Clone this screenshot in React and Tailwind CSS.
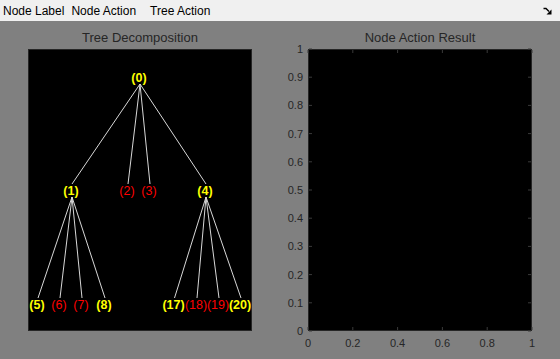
import React from 'react';

const nodes = [
  { id: 0, x: 111, y: 29, c: 'y' },
  { id: 1, x: 43, y: 142, c: 'y', p: 0 },
  { id: 2, x: 99, y: 142, c: 'r', p: 0 },
  { id: 3, x: 121, y: 142, c: 'r', p: 0 },
  { id: 4, x: 177, y: 142, c: 'y', p: 0 },
  { id: 5, x: 9, y: 256, c: 'y', p: 1 },
  { id: 6, x: 31, y: 256, c: 'r', p: 1 },
  { id: 7, x: 53, y: 256, c: 'r', p: 1 },
  { id: 8, x: 76, y: 256, c: 'y', p: 1 },
  { id: 17, x: 145.5, y: 256, c: 'y', p: 4 },
  { id: 18, x: 168, y: 256, c: 'r', p: 4 },
  { id: 19, x: 190, y: 256, c: 'r', p: 4 },
  { id: 20, x: 212, y: 256, c: 'y', p: 4 },
];

const byId = {};
nodes.forEach((n) => (byId[n.id] = n));

const TreeAxes = () => (
  <div className="w-[224px] h-[282px] bg-black border border-[#262626]">
    <svg width="222" height="280" className="overflow-visible">
      <g transform="translate(-1,-1)">
        {nodes.filter((n) => n.p !== undefined).map((n) => {
          const p = byId[n.p];
          return (
            <line
              key={'l' + n.id}
              x1={p.x + 1}
              y1={p.y + 6}
              x2={n.x + 1}
              y2={n.y - 7}
              stroke="#d8d8d8"
              strokeWidth="1"
            />
          );
        })}
        {nodes.map((n) => (
          <text
            key={'t' + n.id}
            x={n.x}
            y={n.y + 4}
            textAnchor="middle"
            fontSize="12.5"
            fontFamily="'Liberation Sans', Arial, sans-serif"
            fontWeight={n.c === 'y' ? 'bold' : 'normal'}
            fill={n.c === 'y' ? '#ffff00' : '#ff0000'}
          >
            ({n.id})
          </text>
        ))}
      </g>
    </svg>
  </div>
);

const yTicks = [0, 0.1, 0.2, 0.3, 0.4, 0.5, 0.6, 0.7, 0.8, 0.9, 1];
const xTicks = [0, 0.2, 0.4, 0.6, 0.8, 1];

const ResultAxes = () => (
  <div className="w-[224px] h-[282px] bg-black border border-[#262626]">
    <svg width="222" height="280" className="overflow-visible">
      <g transform="translate(-1,-1)" fontFamily="'Liberation Sans', Arial, sans-serif" fontSize="11" fill="#262626">
        {yTicks.map((v) => {
          const y = 282 * (1 - v);
          return (
            <g key={'y' + v}>
              <line x1="1" y1={y} x2="4" y2={y} stroke="#3a3a3a" />
              <line x1="220" y1={y} x2="223" y2={y} stroke="#3a3a3a" />
              <text x="-5" y={y + 4} textAnchor="end">{v === 0 || v === 1 ? String(v) : v.toFixed(1)}</text>
            </g>
          );
        })}
        {xTicks.map((v) => {
          const x = 224 * v;
          return (
            <g key={'x' + v}>
              <line x1={x} y1="278" x2={x} y2="281" stroke="#3a3a3a" />
              <line x1={x} y1="1" x2={x} y2="4" stroke="#3a3a3a" />
              <text x={x} y="298" textAnchor="middle">{v === 0 || v === 1 ? String(v) : v.toFixed(1)}</text>
            </g>
          );
        })}
      </g>
    </svg>
  </div>
);

const App = () => {
  return (
    <div className="w-[560px] h-[359px] bg-[#808080] font-['Liberation_Sans',Arial,sans-serif] overflow-hidden">
      <div className="h-[21px] bg-[#f0f0f0] flex items-center text-[12px] text-black pl-[3px]">
        <span>Node Label</span>
        <span className="ml-[7px]">Node Action</span>
        <span className="ml-[14px]">Tree Action</span>
        <svg width="9" height="8" viewBox="0 0 9 8" className="ml-auto mr-[8px]">
          <path d="M0.5 1.5 L3 1.5 L6 4.5" stroke="#000" strokeWidth="1.4" fill="none" />
          <path d="M3.5 7.5 L8.5 7.5 L8.5 2.5 Z" fill="#000" />
        </svg>
      </div>
      <div className="flex pl-[28px] pt-[8px] gap-[56px]">
        <div className="flex flex-col">
          <div className="h-[20px] flex items-center justify-center pb-[2px] text-[13px] text-[#262626]">
            Tree Decomposition
          </div>
          <TreeAxes />
        </div>
        <div className="flex flex-col">
          <div className="h-[20px] flex items-center justify-center pb-[2px] text-[13px] text-[#262626]">
            Node Action Result
          </div>
          <ResultAxes />
        </div>
      </div>
    </div>
  );
};

export default App;
